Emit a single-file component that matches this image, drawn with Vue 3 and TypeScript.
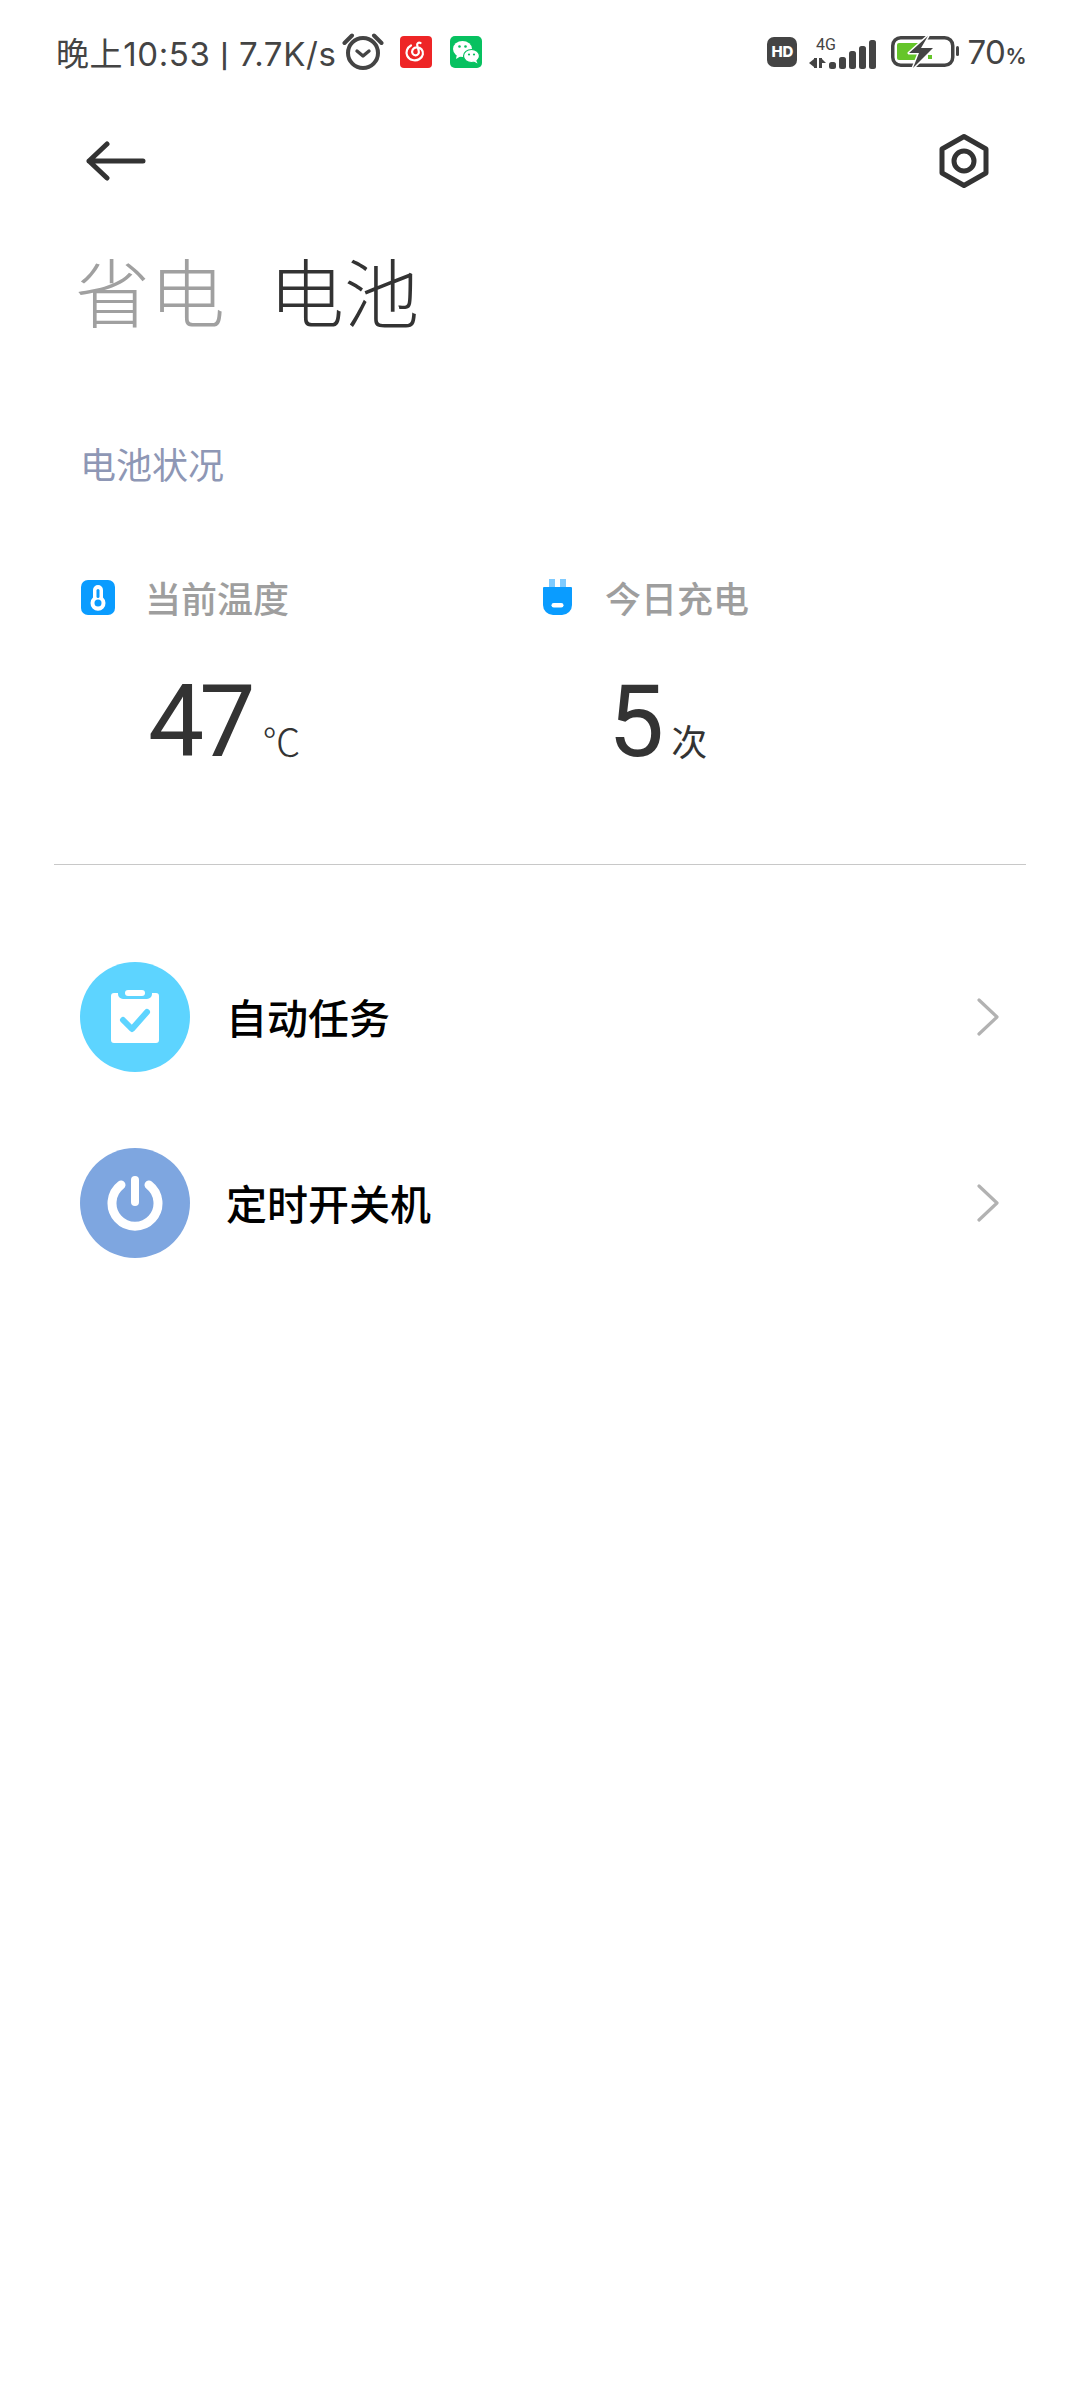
<template>
  <div class="page">
    <div class="statusbar">
      <div class="status-left">
        <span class="status-text">晚上10:53 <span class="sep">|</span> 7.7K/s</span>
        <svg class="ic-alarm" width="42" height="38" viewBox="0 0 42 38">
          <circle cx="21" cy="21" r="15" fill="none" stroke="#444" stroke-width="4" />
          <path d="M15 19l6 5 6-5" fill="none" stroke="#444" stroke-width="3.4" stroke-linecap="round" stroke-linejoin="round" />
          <path d="M2.500 11L10 3.500M39.500 11L32 3.500" stroke="#444" stroke-width="4" stroke-linecap="round" />
        </svg>
        <svg class="ic-app" width="32" height="32" viewBox="0 0 32 32">
          <rect width="32" height="32" rx="4" fill="#ee2526" />
          <path d="M11 9.500c-4 2.200-5.500 6.500-3.800 10.200 2 4.300 8 6 12.300 3.300 3.700-2.300 4.600-6.800 2-9.800-2.500-2.800-7.400-2.500-9 .8-1.300 2.700.6 5.500 3.300 5.300 2.400-.2 3.500-2.300 2.900-4.500l-1.500-5.500c-.5-2 1.300-3.300 3.300-2.300" fill="none" stroke="#fff" stroke-width="2.200" stroke-linecap="round" stroke-linejoin="round" />
        </svg>
        <svg class="ic-app ic-wechat" width="32" height="32" viewBox="0 0 32 32">
          <rect width="32" height="32" rx="5" fill="#07c160" />
          <ellipse cx="12.500" cy="13" rx="9.500" ry="8" fill="#fff" />
          <path d="M7 18l-1 5 5-3z" fill="#fff" />
          <ellipse cx="21.500" cy="20" rx="8" ry="6.500" fill="#fff" stroke="#07c160" stroke-width="1.200" />
          <path d="M26 24l1.500 3.500-4.500-2.500z" fill="#fff" />
          <circle cx="9.500" cy="10.500" r="1.300" fill="#07c160" />
          <circle cx="15.500" cy="10.500" r="1.300" fill="#07c160" />
          <circle cx="19" cy="18.500" r="1.100" fill="#07c160" />
          <circle cx="24" cy="18.500" r="1.100" fill="#07c160" />
        </svg>
      </div>
      <div class="status-right">
        <span class="hd">HD</span>
        <svg class="ic-signal" width="68" height="34" viewBox="0 0 68 34">
          <text x="7" y="15" class="four-g">4G</text>
          <path d="M0 28l5-4v-1h3v10H5v-1z" fill="#444" />
          <path d="M10 23h3v1l4 4h-4v5h-3z" fill="#444" />
          <rect x="20" y="27" width="7" height="7" rx="2.500" fill="#444" />
          <rect x="30" y="22" width="7" height="12" rx="2.500" fill="#444" />
          <rect x="40" y="16" width="7" height="18" rx="2.500" fill="#444" />
          <rect x="50" y="11" width="7" height="23" rx="2.500" fill="#444" />
          <rect x="60" y="5" width="7" height="29" rx="2.500" fill="#444" />
        </svg>
        <svg class="ic-battery" width="68" height="33" viewBox="0 0 68 33">
          <rect x="1.750" y="1.750" width="60" height="27.500" rx="8" fill="none" stroke="#444" stroke-width="3.500" />
          <rect x="6" y="7" width="23" height="17" rx="2" fill="#65c52a" />
          <rect x="37" y="19" width="4" height="4" fill="#65c52a" />
          <path d="M37 0L18 17h10l-6 15 20-20H30z" fill="#444" stroke="#fff" stroke-width="3" paint-order="stroke" stroke-linejoin="round" />
          <rect x="65" y="10" width="3" height="10" rx="1.500" fill="#444" />
        </svg>
        <span class="percent">70<small>%</small></span>
      </div>
    </div>

    <div class="navbar">
      <svg width="60" height="42" viewBox="0 0 60 42">
        <path d="M3 21h54M21 4L3 21l18 17" fill="none" stroke="#333" stroke-width="5" stroke-linecap="round" stroke-linejoin="round" />
      </svg>
      <svg width="52" height="56" viewBox="0 0 52 56">
        <path d="M26 3.500L48 16v24L26 52.500 4 40V16z" fill="none" stroke="#333" stroke-width="5" stroke-linejoin="round" />
        <circle cx="26" cy="28" r="10" fill="none" stroke="#333" stroke-width="5" />
      </svg>
    </div>

    <div class="tabs">
      <span class="tab">省电</span>
      <span class="tab tab-on">电池</span>
    </div>

    <div class="section-title">电池状况</div>

    <div class="stats">
      <div v-for="item in stats" :key="item.label" class="stat">
        <div class="stat-head">
          <span class="stat-icon">
            <svg v-if="item.icon === 'temp'" width="34" height="35" viewBox="0 0 34 35">
              <rect width="34" height="35" rx="7" fill="#0a9cff" />
              <path d="M17 5a5 5 0 0 0-5 5v7.600a7.500 7.500 0 1 0 10 0V10a5 5 0 0 0-5-5z" fill="#fff" />
              <rect x="15.500" y="9" width="3" height="9" rx="1.500" fill="#0a9cff" />
              <circle cx="17" cy="23" r="3.500" fill="#0a9cff" />
            </svg>
            <svg v-else width="34" height="36" viewBox="0 0 34 36">
              <rect x="8" y="0" width="6" height="10" fill="#7fcbff" />
              <rect x="19" y="0" width="6" height="10" fill="#7fcbff" />
              <path d="M3 8h27a1 1 0 0 1 1 1v17a10 10 0 0 1-10 10h-9A10 10 0 0 1 2 26V9a1 1 0 0 1 1-1z" fill="#0a9cff" />
              <rect x="10.500" y="24" width="12" height="4.500" rx="2.250" fill="#fff" />
            </svg>
          </span>
          <span class="stat-label">{{ item.label }}</span>
        </div>
        <div class="stat-value">
          <span class="num">{{ item.value }}</span>
          <span class="unit" :class="{ 'unit-c': item.icon === 'temp' }">{{ item.unit }}</span>
        </div>
      </div>
    </div>

    <div class="divider"></div>

    <div class="list">
      <div class="row">
        <span class="circle circle-task">
          <svg width="48" height="54" viewBox="0 0 48 54">
            <path d="M3 3h4v1a5 5 0 0 0 5 5h24a5 5 0 0 0 5-5V3h4a3 3 0 0 1 3 3v44a3 3 0 0 1-3 3H3a3 3 0 0 1-3-3V6a3 3 0 0 1 3-3z" fill="#fff" />
            <rect x="14" y="0" width="20" height="6" rx="3" fill="#fff" />
            <path d="M12 30l9 9 15-17" fill="none" stroke="#5dd4ff" stroke-width="6" stroke-linecap="round" stroke-linejoin="round" />
          </svg>
        </span>
        <span class="row-text">自动任务</span>
        <svg class="chevron" width="22" height="38" viewBox="0 0 22 38">
          <path d="M2 2l18 17L2 36" fill="none" stroke="#b2b2b2" stroke-width="3.200" stroke-linecap="round" stroke-linejoin="round" />
        </svg>
      </div>
      <div class="row">
        <span class="circle circle-power">
          <svg width="56" height="56" viewBox="0 0 56 56">
            <path d="M14 10a23 23 0 1 0 28 0" fill="none" stroke="#fff" stroke-width="9" stroke-linecap="round" />
            <path d="M28 5v22" fill="none" stroke="#fff" stroke-width="8" stroke-linecap="round" />
          </svg>
        </span>
        <span class="row-text">定时开关机</span>
        <svg class="chevron" width="22" height="38" viewBox="0 0 22 38">
          <path d="M2 2l18 17L2 36" fill="none" stroke="#b2b2b2" stroke-width="3.200" stroke-linecap="round" stroke-linejoin="round" />
        </svg>
      </div>
    </div>
  </div>
</template>

<script setup lang="ts">
interface Stat {
  icon: 'temp' | 'plug'
  label: string
  value: string
  unit: string
}

const stats: Stat[] = [
  { icon: 'temp', label: '当前温度', value: '47', unit: '℃' },
  { icon: 'plug', label: '今日充电', value: '5', unit: '次' },
]
</script>

<style>
html,
body {
  margin: 0;
  background: #fff;
}
</style>

<style scoped>
.page {
  width: 1080px;
  height: 2400px;
  background: #fff;
  font-family: Roboto, "Noto Sans CJK SC", sans-serif;
}

.statusbar {
  display: flex;
  justify-content: space-between;
  align-items: center;
  height: 104px;
  padding: 0 54px 0 56px;
  box-sizing: border-box;
  color: #444;
}

.status-left,
.status-right {
  display: flex;
  align-items: center;
}

.status-text {
  font-family: Inter, "Noto Sans CJK SC", sans-serif;
  font-size: 33px;
  letter-spacing: 0.6px;
  white-space: nowrap;
}

.sep {
  font-family: Roboto, sans-serif;
  font-weight: 700;
}

.ic-alarm {
  margin-left: 6px;
  margin-top: -2px;
}

.ic-app {
  margin-left: 16px;
}

.ic-wechat {
  margin-left: 18px;
}

.hd {
  width: 30px;
  height: 30px;
  border-radius: 7px;
  background: #444;
  color: #fff;
  font-family: Inter, sans-serif;
  font-size: 15px;
  font-weight: 800;
  line-height: 30px;
  text-align: center;
}

.ic-signal {
  margin-left: 12px;
}

.four-g {
  font-family: Roboto, sans-serif;
  font-size: 16px;
  fill: #444;
}

.ic-battery {
  margin-left: 14px;
}

.percent {
  margin-left: 8px;
  font-family: Inter, sans-serif;
  font-size: 33px;
  letter-spacing: -0.5px;
  white-space: nowrap;
}

.percent small {
  font-size: 21px;
  font-weight: 600;
}

.navbar {
  display: flex;
  justify-content: space-between;
  align-items: center;
  height: 56px;
  margin-top: 29px;
  padding: 0 90px 0 86px;
}

.tabs {
  display: flex;
  gap: 44px;
  margin-top: 56px;
  padding-left: 75px;
  font-family: "Noto Sans CJK SC", sans-serif;
  font-size: 75px;
  font-weight: 300;
  line-height: 90px;
}

.tab {
  color: #a0a0a0;
}

.tab-on {
  color: #333;
}

.section-title {
  margin-top: 103px;
  padding-left: 80px;
  font-family: "Noto Sans CJK SC", sans-serif;
  font-size: 36px;
  line-height: 50px;
  color: #8e97b5;
}

.stats {
  display: flex;
  margin-top: 91px;
  padding-left: 81px;
}

.stat {
  width: 460px;
}

.stat-head {
  display: flex;
  align-items: center;
  height: 36px;
}

.stat-icon {
  display: flex;
  width: 64px;
}

.stat-label {
  font-family: "Noto Sans CJK SC", sans-serif;
  font-size: 36px;
  font-weight: 500;
  color: #9e9e9e;
}

.stat-value {
  display: flex;
  align-items: baseline;
  margin-top: 52px;
  padding-left: 67px;
  height: 110px;
  color: #333;
}

.num {
  font-size: 100px;
  line-height: 110px;
  letter-spacing: -5px;
}

.unit {
  margin-left: 12px;
  font-family: "Noto Sans CJK SC", sans-serif;
  font-size: 36px;
}

.unit-c {
  font-size: 38px;
  font-weight: 300;
}

.divider {
  height: 1px;
  margin: 87px 54px 0;
  background: #c8c8c8;
}

.list {
  display: flex;
  flex-direction: column;
  gap: 76px;
  margin-top: 97px;
  padding: 0 81px 0 80px;
}

.row {
  display: flex;
  align-items: center;
  height: 110px;
}

.circle {
  display: flex;
  align-items: center;
  justify-content: center;
  width: 110px;
  height: 110px;
  border-radius: 50%;
}

.circle-task {
  background: #5dd4ff;
}

.circle-power {
  background: #7ea6e0;
}

.row-text {
  flex: 1;
  margin-left: 36px;
  padding-bottom: 2px;
  font-family: "Noto Sans CJK SC", sans-serif;
  font-size: 41px;
  font-weight: 500;
  color: #000;
}
</style>
